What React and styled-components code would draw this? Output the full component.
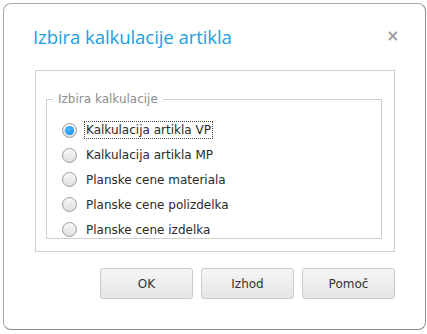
import React, { useState } from "react";
import styled, { createGlobalStyle } from "styled-components";

const Global = createGlobalStyle`
  html, body { margin: 0; padding: 0; background: #ffffff; }
  body { font-family: "DejaVu Sans", Verdana, sans-serif; }
`;

const Dialog = styled.div`
  box-sizing: border-box;
  margin: 3px 0 0 3px;
  width: 423px;
  height: 327px;
  border: 1px solid #a8a8a8;
  border-right-color: #8c8c8c;
  border-bottom-color: #8c8c8c;
  border-radius: 8px;
  background: #fff;
  display: flex;
  flex-direction: column;
`;

const Header = styled.div`
  height: 66px;
  display: flex;
  align-items: center;
  justify-content: space-between;
  padding: 0 26px 2px 29px;
  box-sizing: border-box;
`;

const Title = styled.div`
  font-family: "Open Sans", "Noto Sans", sans-serif;
  font-size: 18.6px;
  color: #1b9fe0;
  letter-spacing: -0.1px;
`;

const Close = styled.span`
  font-family: "DejaVu Sans", sans-serif;
  font-size: 15px;
  font-weight: bold;
  color: #9a9a9a;
`;

const Panel = styled.div`
  margin: 0 30px 0 31px;
  height: 182px;
  box-sizing: border-box;
  border: 1px solid #cfcfcf;
  padding: 21px 12px 12px 10px;
  flex-shrink: 0;
`;

const Group = styled.fieldset`
  margin: 0;
  height: 100%;
  box-sizing: border-box;
  border: 1px solid #cfcfcf;
  padding: 12px 0 0 0;
  display: block;
  overflow: visible;
`;

const Legend = styled.legend`
  font-family: "DejaVu Sans", Verdana, sans-serif;
  font-size: 12px;
  color: #8e8e8e;
  padding: 0 5px;
  margin-left: 6px;
`;

const Option = styled.label`
  display: flex;
  align-items: center;
  height: 24.8px;
  gap: 8px;
  padding-left: 15px;
  cursor: pointer;
`;

const Radio = styled.span`
  width: 15px;
  height: 15px;
  border-radius: 50%;
  box-sizing: border-box;
  border: 1px solid #9c9c9c;
  background: linear-gradient(#f8f8f8, #dedede);
  display: flex;
  align-items: center;
  justify-content: center;
  &::after {
    content: "";
    width: 9px;
    height: 9px;
    border-radius: 50%;
    background: ${(p) => (p.$on ? "radial-gradient(circle at 40% 35%, #49b8ff, #0a8ef0)" : "transparent")};
  }
`;

const Text = styled.span`
  font-family: "DejaVu Sans", Verdana, sans-serif;
  font-size: 12px;
  color: #2a2a2a;
  padding: 0 1px;
  outline: ${(p) => (p.$focus ? "1px dotted #444" : "none")};
  line-height: 16px;
`;

const Buttons = styled.div`
  display: flex;
  justify-content: flex-end;
  gap: 8px;
  margin: 16px 30px 0 0;
`;

const Button = styled.button`
  width: 93px;
  height: 31px;
  border: 1px solid #cbcbcb;
  border-radius: 3px;
  background: linear-gradient(#f5f5f5, #e6e6e6);
  font-family: "DejaVu Sans", Verdana, sans-serif;
  font-size: 12px;
  color: #333;
  padding: 0;
`;

const options = [
  "Kalkulacija artikla VP",
  "Kalkulacija artikla MP",
  "Planske cene materiala",
  "Planske cene polizdelka",
  "Planske cene izdelka",
];

export default function App() {
  const [sel, setSel] = useState(0);
  return (
    <>
      <Global />
      <Dialog>
        <Header>
          <Title>Izbira kalkulacije artikla</Title>
          <Close>×</Close>
        </Header>
        <Panel>
          <Group>
            <Legend>Izbira kalkulacije</Legend>
            {options.map((o, i) => (
              <Option key={o} onClick={() => setSel(i)}>
                <Radio $on={sel === i} />
                <Text $focus={sel === i}>{o}</Text>
              </Option>
            ))}
          </Group>
        </Panel>
        <Buttons>
          <Button>OK</Button>
          <Button>Izhod</Button>
          <Button>Pomoč</Button>
        </Buttons>
      </Dialog>
    </>
  );
}
